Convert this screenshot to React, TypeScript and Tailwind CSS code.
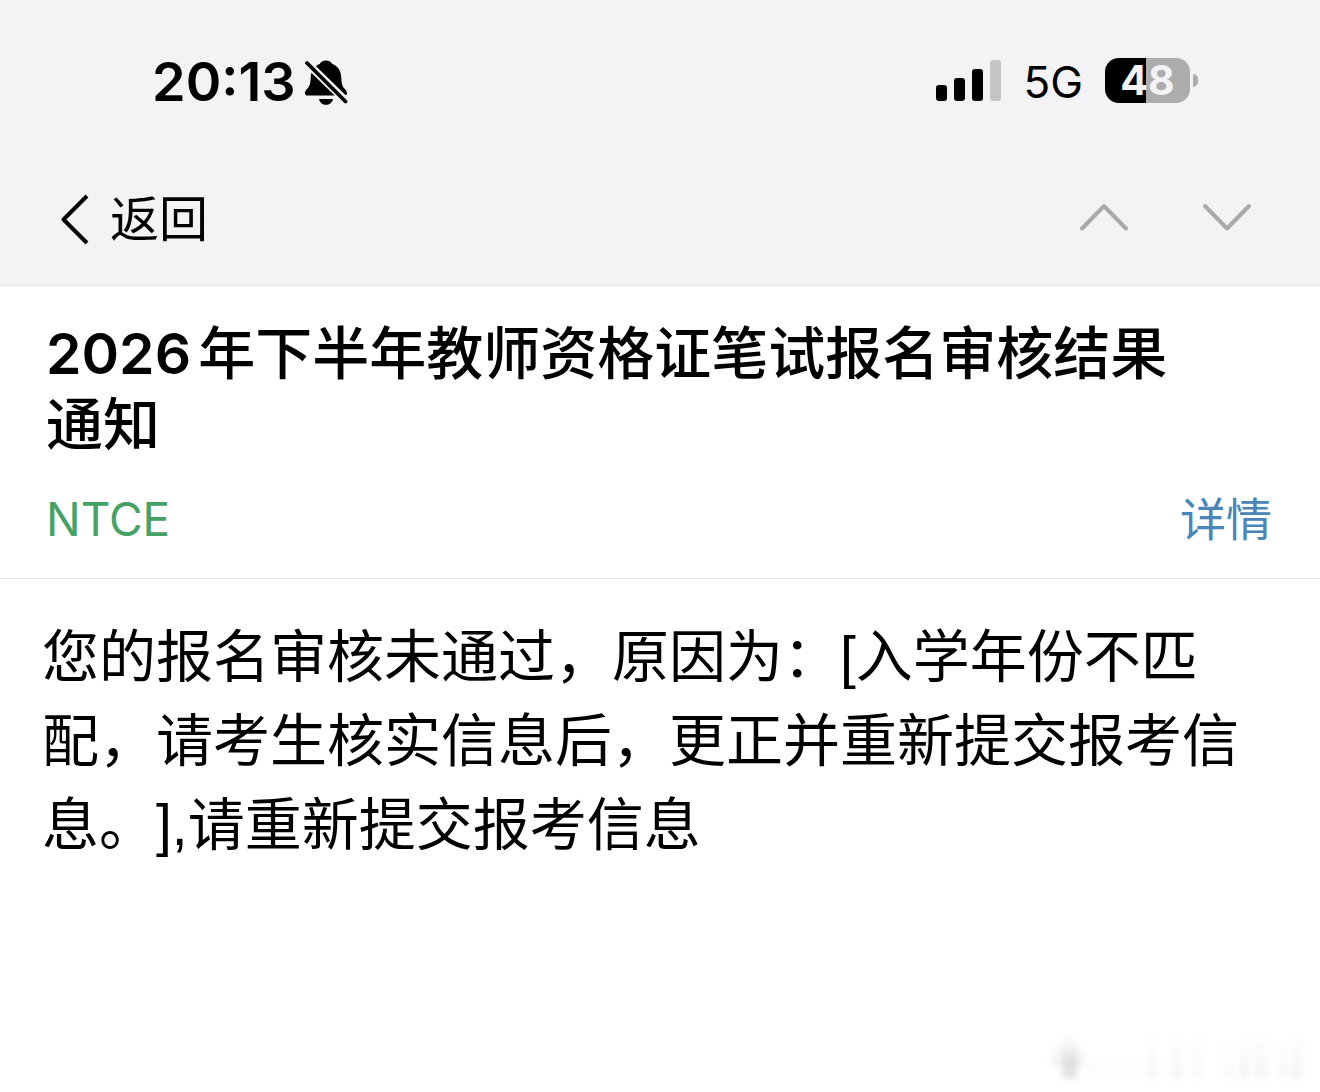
const SIGNAL_BARS = [
  { x: 0, height: 16, color: '#000' },
  { x: 18, height: 23, color: '#000' },
  { x: 36, height: 32, color: '#000' },
  { x: 54, height: 41, color: '#c4c4c6' },
];

const SMUDGES = [
  { x: 32, y: 16, width: 15, height: 42, opacity: 0.2 },
  { x: 22, y: 26, width: 32, height: 20, opacity: 0.09 },
  { x: 56, y: 38, width: 60, height: 12, opacity: 0.03 },
  { x: 118, y: 16, width: 8, height: 42, opacity: 0.06 },
  { x: 143, y: 16, width: 8, height: 42, opacity: 0.08 },
  { x: 164, y: 16, width: 7, height: 42, opacity: 0.06 },
  { x: 194, y: 20, width: 8, height: 38, opacity: 0.04 },
  { x: 209, y: 18, width: 10, height: 40, opacity: 0.07 },
  { x: 224, y: 18, width: 14, height: 40, opacity: 0.06 },
  { x: 249, y: 20, width: 8, height: 38, opacity: 0.06 },
  { x: 262, y: 16, width: 10, height: 42, opacity: 0.08 },
];

function SilentBell() {
  return (
    <svg className="h-12 w-11" viewBox="0 0 44 48" aria-label="静音">
      <path
        d="M22 2.500c3 0 5.200 1.300 6.200 3.600 5.600 1.900 8.600 6.800 9 12.500.3 6.300 1 9.500 3.200 12 1.700 1.800 2.600 3 2.600 4.400 0 1.700-1.200 2.600-3 2.600H4c-1.900 0-3.100-.9-3.100-2.600 0-1.300.8-2.600 2.600-4.400 2.400-2.500 3-5.700 3.300-12 .4-5.700 3.400-10.600 9-12.500 1-2.300 3.200-3.600 6.200-3.600Z"
      />
      <path d="M15 41h14c-.8 3.600-3.600 5.800-7 5.800s-6.200-2.200-7-5.800Z" />
      <path d="M1 3 45 46" stroke="#f3f3f5" strokeWidth="8" />
      <path d="M3 5 41.500 43.500" stroke="#000" strokeWidth="3.800" strokeLinecap="round" />
    </svg>
  );
}

function Battery({ level }: { level: number }) {
  return (
    <div className="flex items-center gap-[3px]">
      <div
        className="flex h-[45px] w-[85px] items-center justify-center rounded-[14px]"
        style={{ backgroundImage: `linear-gradient(to right, #000 ${level}%, #adadad ${level}%)` }}
      >
        <span className="text-[41px] leading-[45px] font-bold text-[#f3f3f5]">{level}</span>
      </div>
      <div className="h-[13px] w-[5px] rounded-r-full bg-[#adadad]" />
    </div>
  );
}

function StatusBar() {
  return (
    <div className="flex items-center justify-between pt-[50px] pr-[122px] pl-[152px]">
      <div className="flex items-center gap-2">
        <span className="text-[54px] leading-[64px] font-semibold">20:13</span>
        <SilentBell />
      </div>
      <div className="flex items-center gap-[22px] pb-1">
        <svg className="h-[41px] w-[65px]" viewBox="0 0 65 41" aria-label="信号">
          {SIGNAL_BARS.map((bar) => (
            <rect key={bar.x} x={bar.x} y={41 - bar.height} width="11" height={bar.height} rx="3" fill={bar.color} />
          ))}
        </svg>
        <span className="pt-1 text-[44px] leading-[56px]">5G</span>
        <Battery level={48} />
      </div>
    </div>
  );
}

function NavBar() {
  return (
    <nav className="flex items-center justify-between pt-[69px] pr-[68px] pb-[30px] pl-[60px]">
      <button type="button" className="flex items-center gap-5">
        <svg className="h-[52px] w-[30px]" viewBox="0 0 30 52" fill="none" stroke="#000" strokeWidth="4">
          <path d="M27 3 3.500 26.500 27 50" strokeLinejoin="round" />
        </svg>
        <span className="pt-0.5 text-[49px] leading-[70px]">返回</span>
      </button>
      <div className="flex items-center gap-[73px] pb-1">
        <button type="button" aria-label="上一封">
          <svg className="h-[30px] w-[50px]" viewBox="0 0 50 30" fill="none" stroke="#a9a9ab" strokeWidth="4">
            <path d="M3 26.500 25 4l22 22.500" strokeLinecap="round" strokeLinejoin="round" />
          </svg>
        </button>
        <button type="button" aria-label="下一封">
          <svg className="h-[30px] w-[50px]" viewBox="0 0 50 30" fill="none" stroke="#a9a9ab" strokeWidth="4">
            <path d="M3 4l22 22.500L47 4" strokeLinecap="round" strokeLinejoin="round" />
          </svg>
        </button>
      </div>
    </nav>
  );
}

function Smudge() {
  return (
    <svg className="h-[72px] w-[290px] blur-[3px]" viewBox="0 0 290 72" aria-hidden="true">
      <defs>
        <linearGradient id="fade" x1="0" y1="0" x2="0" y2="1">
          <stop offset="0" stopColor="#555" stopOpacity="0.1" />
          <stop offset="1" stopColor="#555" />
        </linearGradient>
      </defs>
      {SMUDGES.map((s) => (
        <rect key={s.x} x={s.x} y={s.y} width={s.width} height={s.height} fill="url(#fade)" opacity={s.opacity} />
      ))}
    </svg>
  );
}

export default function App() {
  return (
    <div
      lang="zh-CN"
      className="flex min-h-screen flex-col bg-white font-['Inter','Noto_Sans_CJK_SC',sans-serif] text-black"
    >
      <header className="border-b border-[#e3e3e5] bg-[#f3f3f5]">
        <StatusBar />
        <NavBar />
      </header>
      <section className="border-b border-[#e6e6e6] pt-8 pb-6">
        <h1 className="pr-28 pl-[46px] font-['Inter','Noto_Sans_CJK_SC_Medium','Noto_Sans_CJK_SC',sans-serif] text-[57px] leading-[71px] font-semibold [text-autospace:normal]">
          2026年下半年教师资格证笔试报名审核结果通知
        </h1>
        <div className="mt-6 flex items-center justify-between pr-12 pl-[46px] text-[46px] leading-[70px]">
          <span className="text-[#45a164]">NTCE</span>
          <a href="#detail" className="text-[#4a86b8]">
            详情
          </a>
        </div>
      </section>
      <main className="flex-1 pt-9 pr-10 pl-[42px]">
        <p className="font-['Liberation_Sans','Noto_Sans_CJK_SC',sans-serif] text-[57px] leading-[84px] [text-spacing-trim:space-all]">
          您的报名审核未通过，原因为：[入学年份不匹配，请考生核实信息后，更正并重新提交报考信息。],请重新提交报考信息
        </p>
      </main>
      <footer className="flex justify-end">
        <Smudge />
      </footer>
    </div>
  );
}
